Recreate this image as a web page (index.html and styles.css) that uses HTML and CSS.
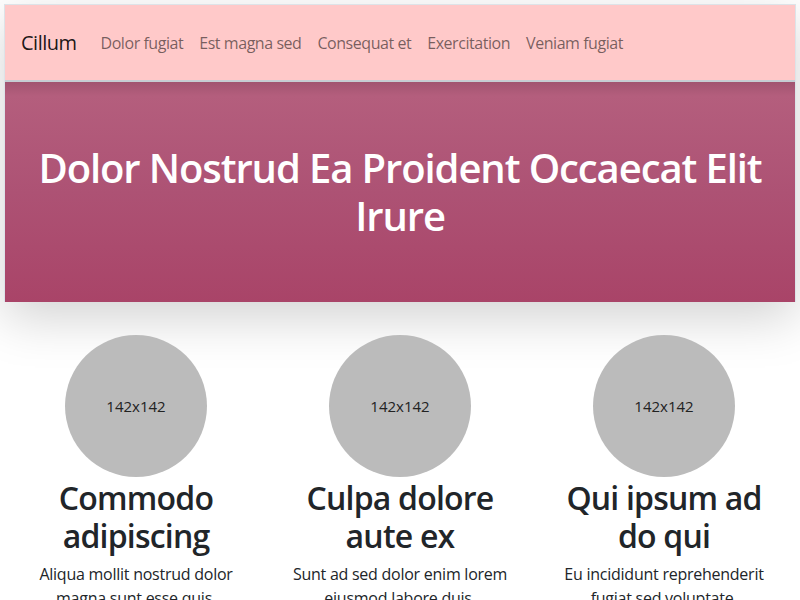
FILE: index.html
```html
<!DOCTYPE html>
<html lang="en">
<head>
<meta charset="utf-8">
<title>Cillum</title>
<link rel="stylesheet" href="styles.css">
</head>
<body>
<header class="masthead">
  <nav class="navbar">
    <a class="brand" href="#">Cillum</a>
    <ul class="nav">
      <li><a class="nav-link" href="#">Dolor fugiat</a></li>
      <li><a class="nav-link" href="#">Est magna sed</a></li>
      <li><a class="nav-link" href="#">Consequat et</a></li>
      <li><a class="nav-link" href="#">Exercitation</a></li>
      <li><a class="nav-link" href="#">Veniam fugiat</a></li>
    </ul>
  </nav>
  <section class="hero">
    <h1 class="hero-title">Dolor Nostrud Ea Proident Occaecat Elit Irure</h1>
  </section>
</header>
<main class="features">
  <div class="feature">
    <div class="placeholder">142x142</div>
    <h2 class="feature-title">Commodo adipiscing</h2>
    <p class="feature-text">Aliqua mollit nostrud dolor magna sunt esse quis.</p>
  </div>
  <div class="feature">
    <div class="placeholder">142x142</div>
    <h2 class="feature-title">Culpa dolore aute ex</h2>
    <p class="feature-text">Sunt ad sed dolor enim lorem eiusmod labore duis.</p>
  </div>
  <div class="feature">
    <div class="placeholder">142x142</div>
    <h2 class="feature-title">Qui ipsum ad do qui</h2>
    <p class="feature-text">Eu incididunt reprehenderit fugiat sed voluptate.</p>
  </div>
</main>
</body>
</html>
```
FILE: styles.css
```css
* { box-sizing: border-box; }

body {
  margin: 0;
  font-family: "Open Sans", "Noto Sans", sans-serif;
  font-size: 16px;
  line-height: 1.5;
  color: #212529;
  background: #fff;
}

.masthead {
  margin: 4px 4px 0;
  border: 1px solid #dde3e8;
  border-bottom: 0;
  box-shadow: 0 16px 48px rgba(0, 0, 0, 0.175);
}

.navbar {
  display: flex;
  align-items: center;
  height: 77px;
  padding: 0 16px;
  background: #ffc9c9;
  border-bottom: 2px solid #c6cdd3;
}

.brand {
  font-size: 20px;
  color: rgba(0, 0, 0, 0.9);
  text-decoration: none;
  margin-right: 16px;
  letter-spacing: -0.5px;
}

.nav {
  display: flex;
  list-style: none;
  margin: 0;
  padding: 0;
}

.nav-link {
  display: block;
  padding: 8px;
  color: rgba(0, 0, 0, 0.55);
  text-decoration: none;
  letter-spacing: -0.45px;
}

.hero {
  height: 220px;
  display: flex;
  align-items: center;
  justify-content: center;
  padding: 0 16px;
  background: linear-gradient(to bottom, #a15470 0, #b45e7d 14px, #ad5274 110px, #a94468 100%);
}

.hero-title {
  margin: 0;
  color: #fff;
  font-size: 40px;
  font-weight: 600;
  line-height: 1.2;
  text-align: center;
  letter-spacing: -1.1px;
}

.features {
  display: grid;
  grid-template-columns: repeat(3, 264px);
  margin: 33px 4px 0;
}

.feature {
  display: flex;
  flex-direction: column;
  align-items: center;
  padding: 0 16px;
  text-align: center;
}

.placeholder {
  width: 142px;
  height: 142px;
  border-radius: 50%;
  background: #bbbbbb;
  color: #222;
  font-size: 15px;
  display: flex;
  align-items: center;
  justify-content: center;
}

.feature-title {
  margin: 2px 0 6px;
  font-size: 32px;
  font-weight: 600;
  line-height: 1.2;
  letter-spacing: -0.8px;
}

.feature-text {
  margin: 0;
  letter-spacing: -0.25px;
}
```
